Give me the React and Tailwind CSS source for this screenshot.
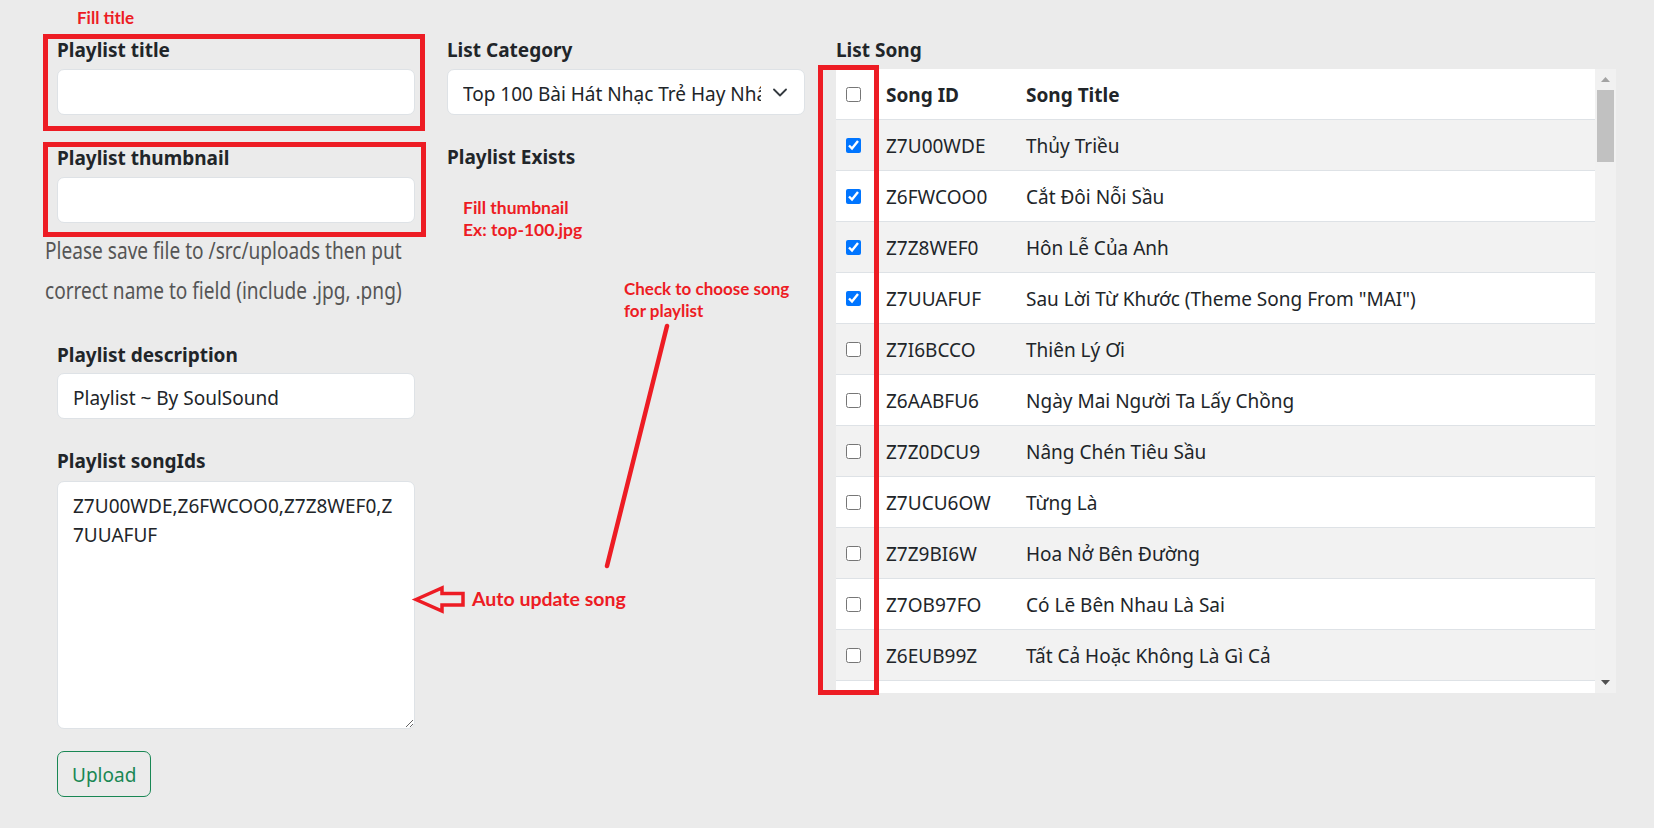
import React from "react";

const songs = [
  ["Z7U00WDE", "Thủy Triều", true],
  ["Z6FWCOO0", "Cắt Đôi Nỗi Sầu", true],
  ["Z7Z8WEF0", "Hôn Lễ Của Anh", true],
  ["Z7UUAFUF", 'Sau Lời Từ Khước (Theme Song From "MAI")', true],
  ["Z7I6BCCO", "Thiên Lý Ơi", false],
  ["Z6AABFU6", "Ngày Mai Người Ta Lấy Chồng", false],
  ["Z7Z0DCU9", "Nâng Chén Tiêu Sầu", false],
  ["Z7UCU6OW", "Từng Là", false],
  ["Z7Z9BI6W", "Hoa Nở Bên Đường", false],
  ["Z7OB97FO", "Có Lẽ Bên Nhau Là Sai", false],
  ["Z6EUB99Z", "Tất Cả Hoặc Không Là Gì Cả", false],
];

function Label({ children, className = "" }) {
  return (
    <div className={"h-[30px] leading-[30px] text-[19px] font-bold text-[#212529] whitespace-nowrap " + className}>
      <span className="relative top-[2px]">{children}</span>
    </div>
  );
}

function TextInput({ value = "", className = "" }) {
  return (
    <input
      readOnly
      value={value}
      className={
        "block w-full h-[46px] bg-white border border-[#dee2e6] rounded-[7px] px-[15px] pt-[4px] text-[19px] text-[#212529] outline-none " +
        className
      }
    />
  );
}

function Check({ checked }) {
  return (
    <input
      type="checkbox"
      readOnly
      checked={checked}
      className="block w-[15px] h-[15px] m-0 relative top-[1px] accent-[#0075ff]"
    />
  );
}

const annot = { fontFamily: 'Lato, "Open Sans", sans-serif' };

export default function App() {
  return (
    <div
      className="relative w-[1654px] h-[828px] bg-[#ebebeb] overflow-hidden text-[#212529]"
      style={{ fontFamily: '"Noto Sans", "Open Sans", sans-serif' }}
    >
      <div className="flex pl-[57px] pt-[33px]">
        {/* Left column */}
        <div className="flex flex-col w-[358px] shrink-0">
          <Label>Playlist title</Label>
          <TextInput className="mt-[6px]" />
          <Label className="mt-[26px]">Playlist thumbnail</Label>
          <TextInput className="mt-[6px]" />
          <div className="mt-[7px] -ml-[12px] text-[24px] leading-[40px] text-[#555555] whitespace-nowrap origin-left scale-x-[0.795]">
            Please save file to /src/uploads then put
            <br />
            correct name to field (include .jpg, .png)
          </div>
          <Label className="mt-[28px]">Playlist description</Label>
          <TextInput className="mt-[5px]" value="Playlist ~ By SoulSound" />
          <Label className="mt-[25px]">Playlist songIds</Label>
          <textarea
            readOnly
            value={"Z7U00WDE,Z6FWCOO0,Z7Z8WEF0,Z\n7UUAFUF"}
            className="mt-[7px] block w-full h-[248px] bg-white border border-[#dee2e6] rounded-[7px] px-[15px] py-[10px] text-[19px] leading-[29px] text-[#212529] outline-none resize-y"
          />
          <div className="mt-[22px]">
            <button className="h-[46px] px-[14px] pt-[3px] border border-[#198754] rounded-[7px] text-[19px] text-[#198754] bg-transparent">
              Upload
            </button>
          </div>
        </div>

        {/* Middle column */}
        <div className="flex flex-col w-[358px] shrink-0 ml-[32px]">
          <Label>List Category</Label>
          <div className="mt-[6px] h-[46px] bg-white border border-[#dee2e6] rounded-[7px] flex items-center pl-[15px] pr-[17px]">
            <div className="flex-1 overflow-hidden whitespace-nowrap text-[19px] text-[#212529] mr-[12px] pt-[4px]">
              Top 100 Bài Hát Nhạc Trẻ Hay Nhất
            </div>
            <svg width="14" height="9" viewBox="0 0 14 9" fill="none">
              <path d="M1 1.5 L7 7.5 L13 1.5" stroke="#343a40" strokeWidth="1.8" strokeLinecap="round" strokeLinejoin="round" />
            </svg>
          </div>
          <Label className="mt-[25px]">Playlist Exists</Label>
        </div>

        {/* Right column */}
        <div className="flex flex-col w-[780px] shrink-0 ml-[31px]">
          <Label>List Song</Label>
          <div className="mt-[6px] h-[624px] flex">
            <div className="flex-1 h-full overflow-hidden bg-white">
              <table className="w-full table-fixed border-collapse text-[19px]">
                <colgroup>
                  <col className="w-[40px]" />
                  <col className="w-[140px]" />
                  <col />
                </colgroup>
                <thead>
                  <tr className="h-[50px] bg-white border-b border-[#dee2e6]">
                    <th className="pl-[10px] align-middle">
                      <Check checked={false} />
                    </th>
                    <th className="px-[10px] pt-[3px] text-left font-bold">Song ID</th>
                    <th className="px-[10px] pt-[3px] text-left font-bold">Song Title</th>
                  </tr>
                </thead>
                <tbody>
                  {songs.map(([id, title, checked], i) => (
                    <tr
                      key={id}
                      className={
                        "h-[51px] border-b border-[#dee2e6] " + (i % 2 === 0 ? "bg-[#f2f2f2]" : "bg-white")
                      }
                    >
                      <td className="pl-[10px] align-middle">
                        <Check checked={checked} />
                      </td>
                      <td className="px-[10px] pt-[4px] whitespace-nowrap">{id}</td>
                      <td className="px-[10px] pt-[4px] whitespace-nowrap">{title}</td>
                    </tr>
                  ))}
                  <tr className="h-[51px] bg-white">
                    <td />
                    <td />
                    <td />
                  </tr>
                </tbody>
              </table>
            </div>
            <div className="w-[21px] h-full bg-[#f1f1f1] flex flex-col items-center">
              <div className="h-[21px] w-full flex items-center justify-center">
                <svg width="9" height="5" viewBox="0 0 9 5">
                  <path d="M0 5 L4.5 0 L9 5 Z" fill="#a3a3a3" />
                </svg>
              </div>
              <div className="w-[17px] h-[72px] bg-[#c1c1c1]" />
              <div className="flex-1" />
              <div className="h-[21px] w-full flex items-center justify-center">
                <svg width="9" height="5" viewBox="0 0 9 5">
                  <path d="M0 0 L9 0 L4.5 5 Z" fill="#505050" />
                </svg>
              </div>
            </div>
          </div>
        </div>
      </div>

      {/* Annotations */}
      <div
        className="absolute left-[77px] top-[8px] text-[17px] leading-[20px] font-bold text-[#ed1c24]"
        style={annot}
      >
        Fill title
      </div>
      <div className="absolute left-[43px] top-[34px] w-[382px] h-[97px] border-[5px] border-[#ed1c24]" />
      <div className="absolute left-[43px] top-[142px] w-[383px] h-[95px] border-[5px] border-[#ed1c24]" />
      <div className="absolute left-[818px] top-[65px] w-[61px] h-[630px] border-[5px] border-[#ed1c24]" />

      <div
        className="absolute left-[463px] top-[197px] text-[17.5px] leading-[22px] font-bold text-[#ed1c24]"
        style={annot}
      >
        Fill thumbnail
        <br />
        Ex: top-100.jpg
      </div>

      <div
        className="absolute left-[624px] top-[278px] text-[17px] leading-[22px] font-bold text-[#ed1c24]"
        style={annot}
      >
        Check to choose song
        <br />
        for playlist
      </div>

      <svg className="absolute left-0 top-0 pointer-events-none" width="1654" height="828">
        <line x1="667" y1="326" x2="607" y2="566" stroke="#ed1c24" strokeWidth="4.5" strokeLinecap="round" />
        <path
          d="M416 599.5 L442 588 L442 593.5 L463 593.5 L463 605 L442 605 L442 611 Z"
          fill="none"
          stroke="#ed1c24"
          strokeWidth="3.5"
          strokeLinejoin="miter"
        />
      </svg>

      <div
        className="absolute left-[472px] top-[587px] text-[19.5px] leading-[24px] font-bold text-[#ed1c24]"
        style={annot}
      >
        Auto update song
      </div>
    </div>
  );
}
